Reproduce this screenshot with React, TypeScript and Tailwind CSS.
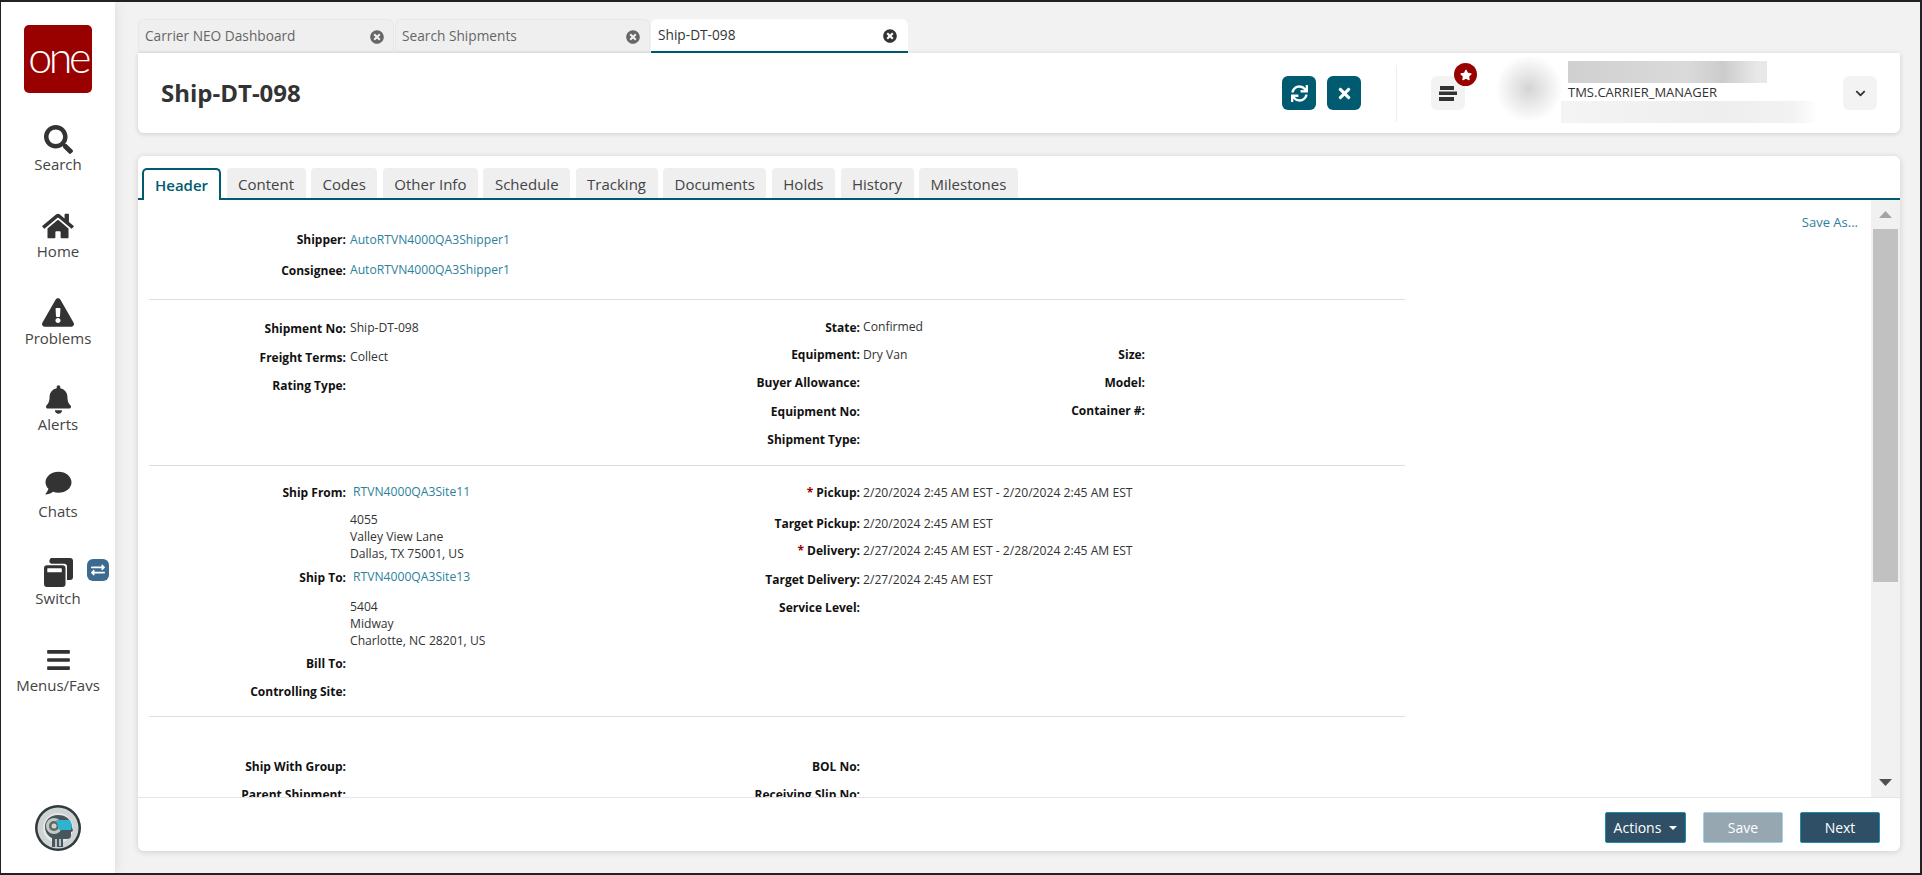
import type { ReactNode } from "react";
import {
  FaBars,
  FaBell,
  FaChevronDown,
  FaComment,
  FaExchangeAlt,
  FaExclamationTriangle,
  FaHome,
  FaSearch,
  FaStar,
  FaSync,
  FaTimes,
  FaTimesCircle,
} from "react-icons/fa";

function SwitchIcon() {
  return (
    <svg viewBox="0 0 29 29" className="h-[29px] w-[29px]" fill="#333">
      <path d="M10 0h16a3 3 0 0 1 3 3v16a3 3 0 0 1-3 3h-3V8.800a3 3 0 0 0-3-3H7.300A3 3 0 0 1 10 0z" />
      <path fillRule="evenodd" d="M3 7.300h15.500a3 3 0 0 1 3 3V26a3 3 0 0 1-3 3H3a3 3 0 0 1-3-3V10.300a3 3 0 0 1 3-3zM3.800 10.300a.5.5 0 0 0-.5.5v3a.5.5 0 0 0 .5.5h13.500a.5.5 0 0 0 .5-.5v-3a.5.5 0 0 0-.5-.5z" />
    </svg>
  );
}

function BotAvatar() {
  return (
    <svg viewBox="0 0 46 46" className="h-[46px] w-[46px]">
      <circle cx="23" cy="23" r="23" fill="#2f3a3e" />
      <circle cx="23" cy="23" r="20.500" fill="#cfd3d3" />
      <circle cx="23" cy="23" r="15" fill="#e6e8e8" />
      <path d="M17 42v-9c-4-2-7-6-7-11 0-7 5-12 13-12 7 0 11 3 13 8l2 8-2 1v4c0 2-2 3-4 3h-4v8z" fill="#47565c" />
      <circle cx="19" cy="21" r="8" fill="#c3c9c2" />
      <circle cx="19" cy="21" r="5" fill="#5b686b" />
      <circle cx="19" cy="21" r="2.500" fill="#cfd3c8" />
      <path d="M21 15h14l2 5-1 5H24c-1-3-2-7-3-10z" fill="#2fb4d0" />
      <path d="M20 34h2v8h-2zm4 0h2v7h-2z" fill="#b9c2c4" />
    </svg>
  );
}

const NAV = [
  { label: "Search", icon: <FaSearch className="h-[29px] w-[29px]" /> },
  { label: "Home", icon: <FaHome className="h-[28px] w-[32px]" /> },
  { label: "Problems", icon: <FaExclamationTriangle className="h-[29px] w-[32px]" /> },
  { label: "Alerts", icon: <FaBell className="h-[29px] w-[25px]" /> },
  { label: "Chats", icon: <FaComment className="mb-[6px] h-[26px] w-[29px]" /> },
  { label: "Switch", icon: <SwitchIcon /> },
  { label: "Menus/Favs", icon: <FaBars className="h-[26px] w-[25px]" /> },
];

const PAGE_TABS = [
  { label: "Carrier NEO Dashboard", width: "w-[256px]" },
  { label: "Search Shipments", width: "w-[255px]" },
  { label: "Ship-DT-098", width: "w-[257px]", active: true },
];

const FORM_TABS = ["Content", "Codes", "Other Info", "Schedule", "Tracking", "Documents", "Holds", "History", "Milestones"];

function LeftField(props: { label: string; h: string; children?: ReactNode }) {
  return (
    <div className={`flex items-center ${props.h}`}>
      <span className="w-[208px] shrink-0 whitespace-nowrap text-right font-bold text-[#111]">{props.label}</span>
      {props.children}
    </div>
  );
}

function Value({ children }: { children: ReactNode }) {
  return <span className="ml-[4px] whitespace-nowrap text-[12.150px] text-[#333]">{children}</span>;
}

function SiteLink({ children }: { children: ReactNode }) {
  return <span className="ml-[7px] whitespace-nowrap text-[12.150px] text-[#2d7f9d]">{children}</span>;
}

function Address({ lines, className }: { lines: string[]; className: string }) {
  return (
    <div className={`ml-[212px] text-[12.150px] text-[#333] ${className}`}>
      {lines.map(l => (
        <div key={l} className="h-[17px] whitespace-nowrap leading-[17px]">{l}</div>
      ))}
    </div>
  );
}

function MidField({ label, h, required, children }: { label: string; h: string; required?: boolean; children?: ReactNode }) {
  return (
    <div className={`flex items-center ${h}`}>
      <span className="w-[222px] shrink-0 whitespace-nowrap text-right font-bold text-[#111]">
        {required && <span className="text-[#990000]">* </span>}
        {label}
      </span>
      {children && <span className="ml-[3px] whitespace-nowrap text-[12.150px] text-[#333]">{children}</span>}
    </div>
  );
}

function SideField({ label, h }: { label: string; h: string }) {
  return (
    <div className={`flex w-[147px] items-center justify-end whitespace-nowrap font-bold text-[#111] ${h}`}>{label}</div>
  );
}

function Rule() {
  return <div className="ml-[11px] h-px w-[1256px] shrink-0 bg-[#dddddd]" />;
}

export default function App() {
  return (
    <div className="flex h-screen overflow-hidden border-t-2 border-r-2 border-b-2 border-l border-[#222] bg-[#f2f2f2] font-['Open_Sans',sans-serif] text-[12px]">
      {/* Sidebar */}
      <aside className="z-10 flex w-[114px] shrink-0 flex-col items-center bg-white pt-[23px] shadow-[2px_0_10px_rgba(0,0,0,0.08)]">
        <div className="flex h-[68px] w-[68px] items-center justify-center rounded-[5px] bg-[#990000] pb-[5px] font-['Lato',sans-serif] text-[43px] leading-none font-light tracking-[-0.08em] text-white">
          one
        </div>
        <nav className="mt-[30px] flex w-full flex-col">
          {NAV.map(item => (
            <div key={item.label} className="relative flex h-[86.800px] flex-col items-center text-[15px] text-[#444]">
              <div className="flex h-[32px] items-center justify-center text-[#333]">{item.icon}</div>
              <span className="h-[18px] leading-[18px]">{item.label}</span>
              {item.label === "Switch" && (
                <span className="absolute top-[2px] left-[86px] flex h-[22px] w-[22px] items-center justify-center rounded-[6px] bg-[#3d6a8f] text-white">
                  <FaExchangeAlt className="h-[14px] w-[14px]" />
                </span>
              )}
            </div>
          ))}
        </nav>
        <div className="mt-auto mb-[22px]">
          <BotAvatar />
        </div>
      </aside>

      <main className="flex min-w-0 flex-1 flex-col pt-[17px] pr-[20px] pb-[22px] pl-[23px]">
        {/* Page tabs */}
        <div className="flex h-[34px] shrink-0 gap-px">
          {PAGE_TABS.map(t => (
            <div
              key={t.label}
              className={`flex items-center justify-between rounded-t-[6px] text-[13.700px] ${t.width} ${
                t.active
                  ? "border-b-2 border-[#005b70] bg-white pt-px pr-[11px] pl-[7px] text-[#333]"
                  : "border border-b-0 border-[#e8e8e8] bg-[#efefef] pr-[9px] pl-[6px] text-[#666] shadow-[inset_0_-3px_3px_-3px_rgba(0,0,0,0.12)]"
              }`}
            >
              <span>{t.label}</span>
              <FaTimesCircle className={`h-[14px] w-[14px] ${t.active ? "text-[#333]" : "text-[#666]"}`} />
            </div>
          ))}
        </div>

        {/* Title card */}
        <div className="flex h-[80px] shrink-0 items-center rounded-b-[6px] bg-white pr-[23px] pl-[23px] shadow-[0_1px_5px_rgba(0,0,0,0.15)]">
          <h1 className="text-[24px] font-bold text-[#333]">Ship-DT-098</h1>
          <button className="ml-auto flex h-[34px] w-[34px] items-center justify-center rounded-[6px] bg-[#005b70] text-white">
            <FaSync className="h-[17px] w-[17px]" />
          </button>
          <button className="ml-[11px] flex h-[34px] w-[34px] items-center justify-center rounded-[6px] bg-[#005b70] text-white">
            <FaTimes className="h-[17px] w-[13px]" />
          </button>
          <div className="ml-[35px] h-[57px] w-px bg-[#eeeeee]" />
          <div className="relative ml-[34px] flex h-[34px] w-[34px] items-center justify-center rounded-[6px] bg-[#f3f3f3]">
            <svg viewBox="0 0 18 15" className="h-[15px] w-[18px]" fill="#333">
              <rect x="1" y="0" width="14" height="4" />
              <rect x="0" y="5.500" width="18" height="3.500" />
              <rect x="0" y="11" width="15" height="4" />
            </svg>
            <span className="absolute -top-[13px] left-[23px] flex h-[23px] w-[23px] items-center justify-center rounded-full bg-[#990000] text-white">
              <FaStar className="h-[12px] w-[12px]" />
            </span>
          </div>
          <div className="mb-[9px] ml-[30px] h-[63px] w-[68px] bg-[radial-gradient(circle,#d4d4d4,#ffffff_72%)]" />
          <div className="-mt-[2px] ml-[5px] flex w-[250px] flex-col">
            <div className="h-[22px] w-[199px] bg-[linear-gradient(90deg,#d0d0d0,#dadada_60%,#cccccc_78%,#e8e8e8_95%)]" />
            <div className="h-[18px] whitespace-nowrap text-[13px] leading-[18px] text-[#333]">TMS.CARRIER_MANAGER</div>
            <div className="-ml-[7px] h-[22px] w-[257px] bg-[linear-gradient(90deg,#f4f4f4,#eeeeee_60%,#f2f2f2_90%,#ffffff)]" />
          </div>
          <button className="ml-[25px] flex h-[34px] w-[34px] items-center justify-center rounded-[6px] bg-[#f3f3f3] text-[#333]">
            <FaChevronDown className="h-[11px] w-[11px]" />
          </button>
        </div>

        {/* Form card */}
        <section className="mt-[23px] flex min-h-0 flex-1 flex-col rounded-[6px] bg-white shadow-[0_1px_6px_rgba(0,0,0,0.15)]">
          <div className="flex h-[44px] shrink-0 items-end gap-[5.500px] border-b-2 border-[#005b70] pt-[12px] pl-[4px]">
            <div className="-mb-[2px] flex h-[32px] items-center rounded-t-[5px] border-2 border-b-0 border-[#005b70] bg-white px-[11px] text-[15px] font-semibold text-[#005b70]">
              Header
            </div>
            {FORM_TABS.map(t => (
              <div key={t} className="flex h-[30px] items-center rounded-t-[4px] bg-[#efefef] px-[11.500px] pt-[2px] text-[15px] text-[#444]">
                {t}
              </div>
            ))}
          </div>

          <div className="flex min-h-0 flex-1">
            <div className="flex w-[1280px] shrink-0 flex-col overflow-hidden">
              {/* Parties */}
              <div className="shrink-0 pt-[25px] pb-[13px]">
                <LeftField label="Shipper:" h="h-[30px]"><Value><span className="text-[#2d7f9d]">AutoRTVN4000QA3Shipper1</span></Value></LeftField>
                <LeftField label="Consignee:" h="h-[31px]"><Value><span className="text-[#2d7f9d]">AutoRTVN4000QA3Shipper1</span></Value></LeftField>
              </div>
              <Rule />

              {/* Shipment */}
              <div className="grid h-[165px] shrink-0 grid-cols-[500px_360px_147px] pt-[14px]">
                <div>
                  <LeftField label="Shipment No:" h="h-[29px]"><Value>Ship-DT-098</Value></LeftField>
                  <LeftField label="Freight Terms:" h="h-[29px]"><Value>Collect</Value></LeftField>
                  <LeftField label="Rating Type:" h="h-[28px]" />
                </div>
                <div>
                  <MidField label="State:" h="h-[27px]">Confirmed</MidField>
                  <MidField label="Equipment:" h="h-[28px]">Dry Van</MidField>
                  <MidField label="Buyer Allowance:" h="h-[27px]" />
                  <MidField label="Equipment No:" h="h-[31px]" />
                  <MidField label="Shipment Type:" h="h-[25px]" />
                </div>
                <div className="pt-[27px]">
                  <SideField label="Size:" h="h-[28px]" />
                  <SideField label="Model:" h="h-[28px]" />
                  <SideField label="Container #:" h="h-[28px]" />
                </div>
              </div>
              <Rule />

              {/* Sites and dates */}
              <div className="grid h-[250px] shrink-0 grid-cols-[500px_360px] pt-[13px]">
                <div>
                  <LeftField label="Ship From:" h="h-[27px]"><SiteLink>RTVN4000QA3Site11</SiteLink></LeftField>
                  <Address className="mt-[5px]" lines={["4055", "Valley View Lane", "Dallas, TX 75001, US"]} />
                  <LeftField label="Ship To:" h="mt-[2px] h-[27px]"><SiteLink>RTVN4000QA3Site13</SiteLink></LeftField>
                  <Address className="mt-[7px]" lines={["5404", "Midway", "Charlotte, NC 28201, US"]} />
                  <LeftField label="Bill To:" h="mt-px h-[27px]" />
                  <LeftField label="Controlling Site:" h="h-[29px]" />
                </div>
                <div>
                  <MidField required label="Pickup:" h="h-[28px]">2/20/2024 2:45 AM EST - 2/20/2024 2:45 AM EST</MidField>
                  <MidField label="Target Pickup:" h="h-[34px]">2/20/2024 2:45 AM EST</MidField>
                  <MidField required label="Delivery:" h="h-[20px]">2/27/2024 2:45 AM EST - 2/28/2024 2:45 AM EST</MidField>
                  <MidField label="Target Delivery:" h="h-[38px]">2/27/2024 2:45 AM EST</MidField>
                  <MidField label="Service Level:" h="h-[18px]" />
                </div>
              </div>
              <Rule />

              {/* References, cut off by the footer */}
              <div className="grid shrink-0 grid-cols-[500px_360px] pt-[36px]">
                <div>
                  <LeftField label="Ship With Group:" h="h-[28px]" />
                  <LeftField label="Parent Shipment:" h="h-[27px]" />
                </div>
                <div>
                  <MidField label="BOL No:" h="h-[28px]" />
                  <MidField label="Receiving Slip No:" h="h-[27px]" />
                </div>
              </div>
            </div>

            <div className="flex-1 pt-[13px] pr-[13px] text-right text-[13px] text-[#2d7f9d]">Save As...</div>

            {/* Scrollbar */}
            <div className="flex w-[29px] shrink-0 flex-col items-center bg-[#f1f1f1]">
              <div className="flex h-[29px] shrink-0 items-center justify-center">
                <svg viewBox="0 0 13 7" className="h-[7px] w-[13px]" fill="#a3a3a3"><path d="M6.500 0 13 7H0z" /></svg>
              </div>
              <div className="h-[353px] w-[25px] shrink-0 bg-[#c1c1c1]" />
              <div className="mt-auto flex h-[29px] shrink-0 items-center justify-center">
                <svg viewBox="0 0 13 7" className="h-[7px] w-[13px]" fill="#505050"><path d="M0 0h13L6.500 7z" /></svg>
              </div>
            </div>
          </div>

          {/* Footer */}
          <div className="flex h-[54px] shrink-0 items-start justify-end gap-[17px] border-t border-[#e5e5e5] pt-[14px] pr-[20px] text-[14px] text-white">
            <button className="flex h-[31px] w-[81px] items-center justify-center gap-[8px] rounded-[2px] border border-[#1a8fab] bg-[#2f4f66]">
              Actions
              <svg viewBox="0 0 8 4" className="h-[4px] w-[8px]" fill="#fff"><path d="M0 0h8L4 4z" /></svg>
            </button>
            <button className="h-[31px] w-[80px] rounded-[2px] border border-[#9fd0de] bg-[#97a7b2]">Save</button>
            <button className="h-[31px] w-[80px] rounded-[2px] border border-[#1a8fab] bg-[#2f4f66]">Next</button>
          </div>
        </section>
      </main>
    </div>
  );
}
